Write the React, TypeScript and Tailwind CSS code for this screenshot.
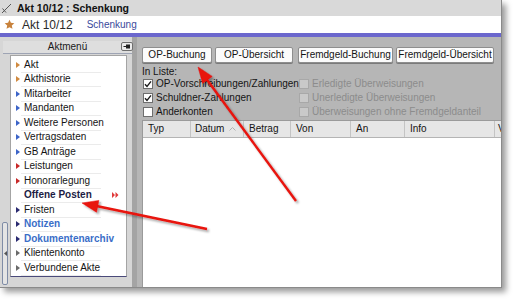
import React from 'react';

type MenuItem = {
    label: string;
    bullet?: string;
    text?: string;
    bold?: boolean;
    current?: boolean;
};

const menu: MenuItem[] = [
    { label: 'Akt', bullet: 'text-[#d08a40]' },
    { label: 'Akthistorie', bullet: 'text-[#d08a40]' },
    { label: 'Mitarbeiter', bullet: 'text-[#3c64c8]' },
    { label: 'Mandanten', bullet: 'text-[#3c64c8]' },
    { label: 'Weitere Personen', bullet: 'text-[#3c64c8]' },
    { label: 'Vertragsdaten', bullet: 'text-[#3c64c8]' },
    { label: 'GB Anträge', bullet: 'text-[#3c64c8]' },
    { label: 'Leistungen', bullet: 'text-[#c82828]' },
    { label: 'Honorarlegung', bullet: 'text-[#c82828]' },
    { label: 'Offene Posten', bold: true, current: true, text: 'text-[#1c1c44]' },
    { label: 'Fristen', bullet: 'text-[#2a2a70]' },
    { label: 'Notizen', bullet: 'text-[#2a2a70]', text: 'text-[#3a6ec8]', bold: true },
    { label: 'Dokumentenarchiv', bullet: 'text-[#2a2a70]', text: 'text-[#3a6ec8]', bold: true },
    { label: 'Klientenkonto', bullet: 'text-[#6a6a6a]' },
    { label: 'Verbundene Akte', bullet: 'text-[#6a6a6a]' },
];

const columns = [
    { label: 'Typ', w: 'w-[48px] pl-[5px]', sort: false },
    { label: 'Datum', w: 'w-[53px] pl-[4px]', sort: true },
    { label: 'Betrag', w: 'w-[47px] pl-[5px]', sort: false },
    { label: 'Von', w: 'w-[60px] pl-[5px]', sort: false },
    { label: 'An', w: 'w-[54px] pl-[5px]', sort: false },
    { label: 'Info', w: 'w-[90px] pl-[5px]', sort: false },
    { label: 'V', w: 'w-[20px] pl-[3px]', sort: false },
];

const Checkbox = ({ label, checked, disabled }: { label: string; checked?: boolean; disabled?: boolean }) => (
    <div className="flex items-center h-[14px]">
        <span
            className={`w-[10px] h-[10px] border flex items-center justify-center shrink-0 ${
                disabled ? 'border-[#a8a8a8] bg-[#c9c9c9]' : 'border-[#6e6e6e] bg-white'
            }`}
        >
            {checked && (
                <svg width="8" height="8" viewBox="0 0 8 8">
                    <path d="M1 4.2 L3 6.4 L7 1.4" fill="none" stroke="#1a1a1a" strokeWidth="1.4" />
                </svg>
            )}
        </span>
        <span className={`ml-[3px] whitespace-nowrap ${disabled ? 'text-[#8c8c8c]' : 'text-[#141414]'}`}>{label}</span>
    </div>
);

const Button = ({ label, w }: { label: string; w: string }) => (
    <div
        className={`${w} h-[16px] flex items-center justify-center bg-[#fbfbfb] border border-[#8e8e8e] rounded-[2px] shadow-[0_1px_0_#7a7a7a] text-[#141414] whitespace-nowrap`}
    >
        {label}
    </div>
);

export default function App() {
    return (
        <div className="relative w-[513px] h-[299px] bg-white overflow-hidden font-['Liberation_Sans',Arial,sans-serif] text-[10px] leading-none">
            <div className="w-[502px] h-[288px] flex flex-col border-r border-b border-[#8a8a8a] shadow-[4px_4px_6px_rgba(0,0,0,0.4)]">
                {/* title bar */}
                <div className="h-[16px] bg-[#d9d9d9] flex items-center pl-[1px] shrink-0">
                    <svg width="11" height="11" viewBox="0 0 11 11">
                        <path d="M1 10 L10 1" stroke="#555" strokeWidth="1" />
                        <path d="M1.5 5.5 L5 9.5" stroke="#555" strokeWidth="1" />
                    </svg>
                    <span className="ml-[5px] font-bold text-[10.5px] text-[#111]">Akt 10/12 : Schenkung</span>
                </div>

                {/* header */}
                <div className="h-[17px] bg-white flex items-center shrink-0">
                    <svg width="11" height="11" viewBox="0 0 24 24" className="ml-[4px]">
                        <path
                            d="M12 1.5 L15.1 8.3 L22.5 9.1 L17 14.1 L18.5 21.5 L12 17.8 L5.5 21.5 L7 14.1 L1.5 9.1 L8.9 8.3 Z"
                            fill="#c8823c"
                        />
                    </svg>
                    <span className="ml-[7px] text-[12px] text-[#2a2a2a]">Akt 10/12</span>
                    <span className="ml-[14px] text-[10px] text-[#3a4a9c]">Schenkung</span>
                </div>
                <div className="h-[4px] bg-[#6b67cd] shrink-0" />

                {/* body */}
                <div className="flex-1 flex min-h-0">
                    {/* left panel */}
                    <div className="w-[132px] bg-[#d6d6d6] flex flex-col shrink-0">
                        <div className="mt-[4px] ml-[3px] h-[13px] relative flex items-center justify-center border-b border-[#9ea4b4] bg-[#dedede]">
                            <span className="text-[#1a1a1a]">Aktmenü</span>
                            <div className="absolute right-[-1px] top-[1px] w-[12px] h-[9px] bg-[#ececec] border border-[#6f6f6f] rounded-[2px] flex items-center justify-center">
                                <svg width="8" height="5" viewBox="0 0 8 5">
                                    <path d="M0.5 2.5 H3" stroke="#222" strokeWidth="1" />
                                    <rect x="3" y="0.5" width="4" height="4" fill="#222" />
                                </svg>
                            </div>
                        </div>
                        <div className="flex-1 flex min-h-0">
                            <div className="w-[10px] flex flex-col justify-end pb-[2px] shrink-0">
                                <div className="ml-[2px] w-[6px] h-[63px] border border-[#7f8ca6] rounded-[2px] bg-[#e4e4e4] flex items-center justify-center">
                                    <svg width="3" height="5" viewBox="0 0 3 5">
                                        <path d="M3 0 L0 2.5 L3 5 Z" fill="#555" />
                                    </svg>
                                </div>
                            </div>
                            <div className="w-[117px] mt-[1px] mb-[10px] bg-white border border-[#a4a4a4] border-b-[#4a4a7a] pt-[2px] flex flex-col">
                                {menu.map(item => (
                                    <div key={item.label} className="h-[14.5px] flex flex-col">
                                        <div className="flex-1 flex items-center">
                                            <span className="w-[13px] flex justify-end pr-[4px]">
                                                {item.bullet && (
                                                    <svg width="4" height="6" viewBox="0 0 4 6" className={item.bullet}>
                                                        <path d="M0 0 L4 3 L0 6 Z" fill="currentColor" />
                                                    </svg>
                                                )}
                                            </span>
                                            <span
                                                className={`whitespace-nowrap ${item.bold ? 'font-bold' : ''} ${item.text ?? 'text-[#141414]'}`}
                                            >
                                                {item.label}
                                            </span>
                                            {item.current && (
                                                <svg width="7" height="6" viewBox="0 0 7 6" className="ml-auto mr-[7px]">
                                                    <path d="M0 0 L3 3 L0 6 Z M3.5 0 L6.5 3 L3.5 6 Z" fill="#e03a3a" />
                                                </svg>
                                            )}
                                        </div>
                                        <div className="h-px ml-[10px] w-[80px] bg-[#ebebeb]" />
                                    </div>
                                ))}
                            </div>
                        </div>
                    </div>

                    {/* splitter */}
                    <div className="w-[5px] bg-[#a4a4a4] shrink-0" />

                    {/* content */}
                    <div className="flex-1 bg-[#b6b6b6] pl-[5px] pt-[10px] flex flex-col min-w-0">
                        <div className="flex items-center">
                            <Button label="OP-Buchung" w="w-[70px]" />
                            <div className="w-[3px]" />
                            <Button label="OP-Übersicht" w="w-[78px]" />
                            <div className="w-[5px]" />
                            <Button label="Fremdgeld-Buchung" w="w-[95px]" />
                            <div className="w-[3px]" />
                            <Button label="Fremdgeld-Übersicht" w="w-[98px]" />
                        </div>
                        <div className="mt-[3px] h-[11px] flex items-end text-[#141414]">In Liste:</div>
                        <div className="grid grid-cols-[156px_1fr] pl-[1px]">
                            <Checkbox label="OP-Vorschreibungen/Zahlungen" checked />
                            <Checkbox label="Erledigte Überweisungen" disabled />
                            <Checkbox label="Schuldner-Zahlungen" checked />
                            <Checkbox label="Unerledigte Überweisungen" disabled />
                            <Checkbox label="Anderkonten" />
                            <Checkbox label="Überweisungen ohne Fremdgeldanteil" disabled />
                        </div>
                        <div className="mt-[1px] flex-1 flex flex-col bg-white border-l border-t border-[#9a9a9a] overflow-hidden">
                            <div className="h-[17px] flex bg-[#e6e6e6] border-b border-[#b4b4b4] shrink-0">
                                {columns.map(col => (
                                    <div
                                        key={col.label}
                                        className={`${col.w} shrink-0 flex items-center border-r border-[#c4c4c4] text-[#141414] relative`}
                                    >
                                        {col.label}
                                        {col.sort && (
                                            <svg width="7" height="4" viewBox="0 0 7 4" className="absolute right-[7px] top-[6px]">
                                                <path d="M0.5 3.5 L3.5 0.5 L6.5 3.5" fill="none" stroke="#b0b0b0" strokeWidth="1" />
                                            </svg>
                                        )}
                                    </div>
                                ))}
                            </div>
                            <div className="flex-1" />
                        </div>
                    </div>
                </div>
            </div>

            {/* annotation arrows */}
            <svg className="absolute inset-0 pointer-events-none" width="513" height="299" viewBox="0 0 513 299">
                <defs>
                    <filter id="sh" x="-20%" y="-20%" width="140%" height="140%">
                        <feDropShadow dx="2" dy="2" stdDeviation="1.3" floodColor="#000" floodOpacity="0.35" />
                    </filter>
                </defs>
                <g filter="url(#sh)" fill="#e8120c" stroke="#e8120c">
                    <line x1="296" y1="201" x2="205" y2="77" strokeWidth="2.4" />
                    <path d="M198 67 L212.2 76.4 L202.6 83.4 Z" strokeWidth="0.5" />
                    <line x1="207" y1="229" x2="94" y2="205.5" strokeWidth="2.4" />
                    <path d="M82 203 L98.9 200.4 L96.5 212.2 Z" strokeWidth="0.5" />
                </g>
            </svg>
        </div>
    );
}
